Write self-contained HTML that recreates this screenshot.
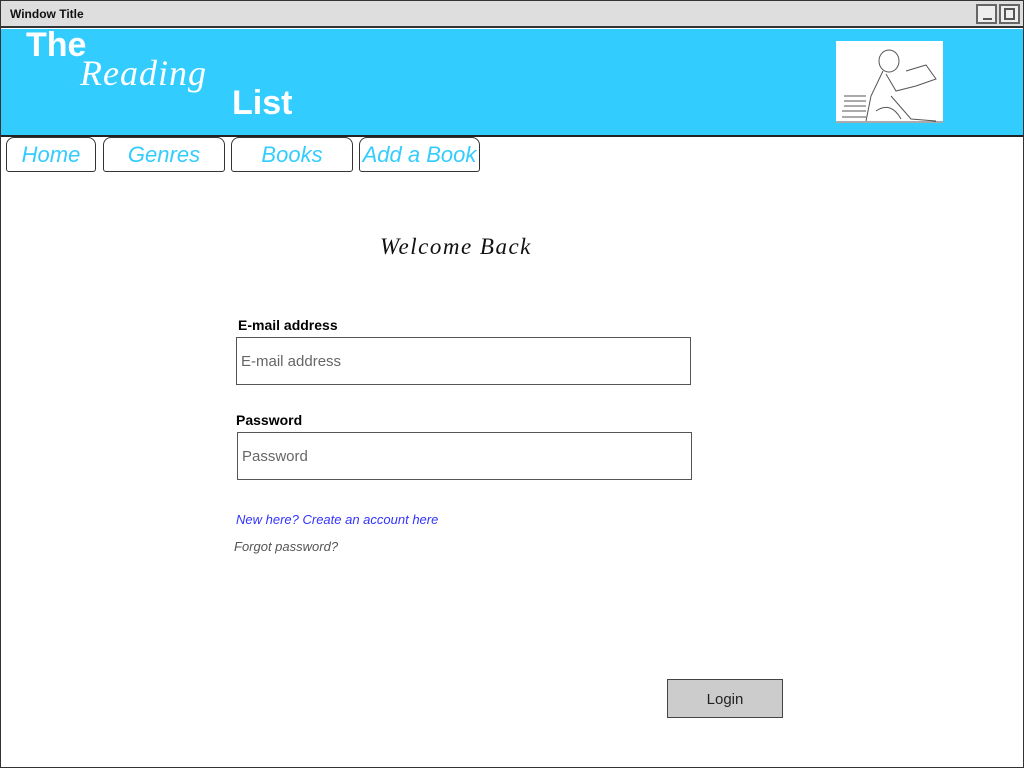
<!DOCTYPE html>
<html><head><style>
body{margin:0;width:1024px;height:768px;overflow:hidden;background:#fff;font-family:"Liberation Sans",sans-serif;position:relative}
div{position:absolute;box-sizing:border-box}
.tab{top:137px;height:35px;border:1px solid #333;border-radius:8px 8px 3px 3px;color:#33ccff;font-style:italic;font-size:22px;text-align:center;line-height:34px}
.inp{border:1.5px solid #555;height:48px;color:#666;font-size:15px;line-height:48px;padding-left:4px}
</style></head><body>
<div style="left:0;top:0;width:1024px;height:768px;border:1px solid #333"></div>
<div style="left:1px;top:1px;width:1022px;height:27px;background:#dedede;border-bottom:2px solid #333"></div>
<div style="left:10px;top:7px;font-size:12px;font-weight:bold;color:#111">Window Title</div>
<div style="left:976px;top:4px;width:21px;height:20px;border:2px solid #666;background:#eee"><div style="left:5px;top:12px;width:9px;height:2px;background:#555"></div></div>
<div style="left:999px;top:4px;width:21px;height:20px;border:2px solid #666;background:#eee"><div style="left:3px;top:2px;width:11px;height:12px;border:2px solid #555"></div></div>
<div style="left:1px;top:29px;width:1022px;height:108px;background:#33ccff;border-bottom:2px solid #222"></div>
<div style="left:26px;top:26px;color:#fff;font-size:34px;font-weight:bold">The</div>
<div style="left:80px;top:52px;color:#fff;font-size:36px;font-style:italic;font-family:'Liberation Serif',serif;letter-spacing:1px">Reading</div>
<div style="left:232px;top:84px;color:#fff;font-size:34px;font-weight:bold">List</div>
<div style="left:836px;top:41px;width:107px;height:82px;background:#fff">
<svg width="107" height="82" viewBox="0 0 107 82" fill="none" stroke="#555" stroke-width="1"><ellipse cx="53" cy="20" rx="10" ry="11"/><path d="M47 30 L35 55 L30 80 M50 33 L60 50 L80 45 M70 30 L90 24 L100 38 L80 45 M55 55 L75 78 L100 80 M40 70 Q55 60 65 78 M0 81 L107 81"/><path d="M8 55h22M8 60h22M8 65h22M6 70h24M6 76h24"/></svg></div>
<div class="tab" style="left:6px;width:90px">Home</div>
<div class="tab" style="left:103px;width:122px">Genres</div>
<div class="tab" style="left:231px;width:122px">Books</div>
<div class="tab" style="left:359px;width:121px">Add a Book</div>
<div style="left:380px;top:234px;font-size:23px;font-style:italic;font-family:'Liberation Serif',serif;color:#111;letter-spacing:1.5px">Welcome Back</div>
<div style="left:238px;top:317px;font-size:14px;font-weight:bold">E-mail address</div>
<div class="inp" style="left:236px;top:337px;width:455px">E-mail address</div>
<div style="left:236px;top:412px;font-size:14px;font-weight:bold">Password</div>
<div class="inp" style="left:237px;top:432px;width:455px">Password</div>
<div style="left:236px;top:512px;font-size:13px;font-style:italic;color:#3333ff">New here? Create an account here</div>
<div style="left:234px;top:539px;font-size:13px;font-style:italic;color:#555">Forgot password?</div>
<div style="left:667px;top:679px;width:116px;height:39px;background:#ccc;border:1px solid #444;text-align:center;line-height:39px;font-size:15px;color:#222">Login</div>
</body></html>
